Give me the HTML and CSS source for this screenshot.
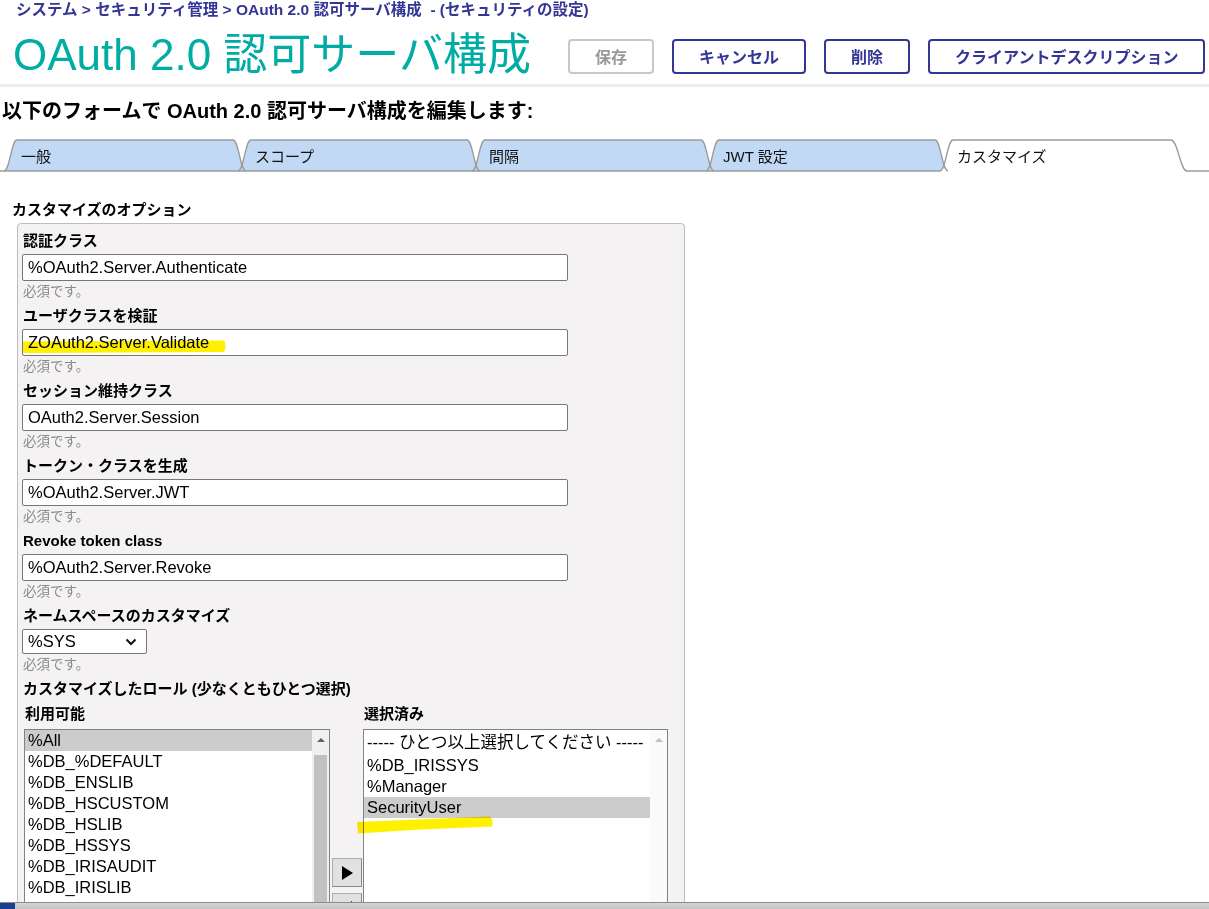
FILE: index.html
```html
<!DOCTYPE html>
<html lang="ja">
<head>
<meta charset="utf-8">
<title>OAuth 2.0 認可サーバ構成</title>
<link rel="stylesheet" href="styles.css">
</head>
<body>
<div class="page">
  <header class="header">
    <div class="breadcrumb">システム &gt; セキュリティ管理 &gt; OAuth 2.0 認可サーバ構成&nbsp; - (セキュリティの設定)</div>
    <div class="title-row">
      <h1 class="title">OAuth 2.0 認可サーバ構成</h1>
      <div class="actions">
        <button class="btn btn-disabled" type="button">保存</button>
        <button class="btn" type="button">キャンセル</button>
        <button class="btn" type="button">削除</button>
        <button class="btn" type="button">クライアントデスクリプション</button>
      </div>
    </div>
  </header>

  <h2 class="intro">以下のフォームで OAuth 2.0 認可サーバ構成を編集します:</h2>

  <div class="tabs">
    <svg class="tab-shapes" width="1209" height="33" viewBox="0 0 1209 33">
      <g fill="#c2d9f5">
        <path d="M4,32 C10,32 11,1 17,1 H233 C239,1 240,32 246,32 Z"/>
        <path d="M238,32 C244,32 245,1 251,1 H467 C473,1 474,32 480,32 Z"/>
        <path d="M472,32 C478,32 479,1 485,1 H701 C707,1 708,32 714,32 Z"/>
        <path d="M706,32 C712,32 713,1 719,1 H935 C941,1 942,32 948,32 Z"/>
      </g>
      <path fill="#ffffff" d="M940,32 C946,32 947,1 953,1 H1171 C1178,1 1180,32 1187,32 Z"/>
      <g fill="none" stroke="#9c9c9c" stroke-width="1.3">
        <path d="M4,32 C10,32 11,1 17,1 H233 C239,1 240,32 246,32"/>
        <path d="M238,32 C244,32 245,1 251,1 H467 C473,1 474,32 480,32"/>
        <path d="M472,32 C478,32 479,1 485,1 H701 C707,1 708,32 714,32"/>
        <path d="M706,32 C712,32 713,1 719,1 H935 C941,1 942,32 948,32"/>
        <path d="M940,32 C946,32 947,1 953,1 H1171 C1178,1 1180,32 1187,32"/>
        <path d="M0,32 H940 M1187,32 H1209"/>
      </g>
    </svg>
    <div class="tab-labels">
      <div class="tab">一般</div>
      <div class="tab">スコープ</div>
      <div class="tab">間隔</div>
      <div class="tab">JWT 設定</div>
      <div class="tab tab-active">カスタマイズ</div>
    </div>
  </div>

  <div class="section-title">カスタマイズのオプション</div>

  <div class="panel">
    <div class="field">
      <div class="label">認証クラス</div>
      <input class="text" type="text" value="%OAuth2.Server.Authenticate">
      <div class="help">必須です。</div>
    </div>
    <div class="field">
      <div class="label">ユーザクラスを検証</div>
      <input class="text" type="text" value="ZOAuth2.Server.Validate">
      <div class="help">必須です。</div>
    </div>
    <div class="field">
      <div class="label">セッション維持クラス</div>
      <input class="text" type="text" value="OAuth2.Server.Session">
      <div class="help">必須です。</div>
    </div>
    <div class="field">
      <div class="label">トークン・クラスを生成</div>
      <input class="text" type="text" value="%OAuth2.Server.JWT">
      <div class="help">必須です。</div>
    </div>
    <div class="field">
      <div class="label">Revoke token class</div>
      <input class="text" type="text" value="%OAuth2.Server.Revoke">
      <div class="help">必須です。</div>
    </div>
    <div class="field">
      <div class="label">ネームスペースのカスタマイズ</div>
      <div class="select">
        <span>%SYS</span>
        <svg class="chev" width="12" height="8" viewBox="0 0 12 8"><path d="M1.5,1.5 L6,6 L10.5,1.5" fill="none" stroke="#111" stroke-width="2"/></svg>
      </div>
      <div class="help">必須です。</div>
    </div>
    <div class="label">カスタマイズしたロール (少なくともひとつ選択)</div>

    <div class="roles">
      <div class="role-col">
        <div class="sublabel">利用可能</div>
        <div class="list">
          <div class="items">
            <div class="item sel">%All</div>
            <div class="item">%DB_%DEFAULT</div>
            <div class="item">%DB_ENSLIB</div>
            <div class="item">%DB_HSCUSTOM</div>
            <div class="item">%DB_HSLIB</div>
            <div class="item">%DB_HSSYS</div>
            <div class="item">%DB_IRISAUDIT</div>
            <div class="item">%DB_IRISLIB</div>
          </div>
          <div class="scrollbar">
            <div class="sb-up"><span class="tri"></span></div>
            <div class="sb-thumb"></div>
          </div>
        </div>
      </div>
      <div class="move-col">
        <div class="mv"><svg width="12" height="14" viewBox="0 0 12 14"><path d="M1,0 L12,7 L1,14 Z" fill="#000"/></svg></div>
        <div class="mv"><svg width="12" height="14" viewBox="0 0 12 14"><path d="M11,0 L0,7 L11,14 Z" fill="#000"/></svg></div>
      </div>
      <div class="role-col role-col-right">
        <div class="sublabel">選択済み</div>
        <div class="list">
          <div class="items">
            <div class="item item-hint">----- ひとつ以上選択してください -----</div>
            <div class="item">%DB_IRISSYS</div>
            <div class="item">%Manager</div>
            <div class="item sel">SecurityUser</div>
          </div>
          <div class="scrollbar scrollbar-off">
            <div class="sb-up"><span class="tri"></span></div>
          </div>
        </div>
      </div>
    </div>
  </div>

  <svg class="marks" width="1209" height="909" viewBox="0 0 1209 909">
    <path d="M23,341.5 L224,340.5 Q227,346 224,352 L23,353 Z" fill="#fff000"/>
    <path d="M357,822 L490,816.5 Q494,821 492,826.5 L420,829.5 L358,833.5 Z" fill="#fff000"/>
  </svg>

  <div class="statusbar"><span class="status-blue"></span></div>
</div>
</body>
</html>
```

FILE: styles.css
```css
html, body {
  margin: 0;
  padding: 0;
  background: #ffffff;
}

body {
  font-family: "Liberation Sans", "Noto Sans CJK JP", sans-serif;
  color: #000;
  overflow: hidden;
}

.page {
  position: relative;
  width: 1209px;
  height: 909px;
  overflow: hidden;
}

.header {
  border-bottom: 3px solid #eeeeee;
}

.breadcrumb {
  padding: 1px 0 0 16px;
  font-size: 15.5px;
  line-height: 18px;
  font-weight: bold;
  color: #333695;
  white-space: nowrap;
}

.title-row {
  display: flex;
  align-items: center;
  height: 58px;
  margin-top: 7px;
}

.title {
  flex: 0 0 568px;
  box-sizing: border-box;
  margin: 0;
  padding-left: 13px;
  font-size: 44px;
  line-height: 58px;
  font-weight: normal;
  color: #00aca4;
  white-space: nowrap;
}

.actions {
  display: flex;
  gap: 18px;
  padding-top: 2px;
}

.btn {
  height: 35px;
  box-sizing: border-box;
  padding: 0 25px;
  border: 2px solid #333695;
  border-radius: 4px;
  background: #ffffff;
  color: #333695;
  font-family: "Liberation Sans", "Noto Sans CJK JP", sans-serif;
  font-size: 16px;
  font-weight: bold;
  white-space: nowrap;
}

.btn-disabled {
  border-color: #c8c8c8;
  color: #999999;
}

.intro {
  margin: 12px 0 0 2px;
  font-size: 20px;
  line-height: 24px;
  font-weight: bold;
  white-space: nowrap;
}

.tabs {
  display: grid;
  margin-top: 16px;
  height: 33px;
}

.tabs > * {
  grid-area: 1 / 1;
}

.tab-shapes {
  display: block;
}

.tab-labels {
  display: flex;
  padding-left: 4px;
}

.tab {
  width: 234px;
  box-sizing: border-box;
  padding: 2px 0 0 17px;
  font-size: 15px;
  line-height: 31px;
  color: #111;
  white-space: nowrap;
}

.section-title {
  margin: 29px 0 0 12px;
  font-size: 15px;
  line-height: 18px;
  font-weight: bold;
}

.panel {
  margin: 4px 0 0 17px;
  width: 668px;
  height: 720px;
  box-sizing: border-box;
  padding: 8px 4px 0;
  border: 1px solid #bdbdbd;
  border-radius: 4px;
  background: #f4f2f3;
}

.field {
  margin-bottom: 6px;
}

.label {
  padding-left: 1px;
  font-size: 15px;
  line-height: 18px;
  font-weight: bold;
  white-space: nowrap;
}

.text {
  display: block;
  width: 546px;
  height: 27px;
  box-sizing: border-box;
  margin: 4px 0 2px;
  padding: 0 5px;
  border: 1px solid #767676;
  border-radius: 2px;
  background: #ffffff;
  font-family: "Liberation Sans", sans-serif;
  font-size: 16.5px;
  color: #000;
}

.select {
  display: flex;
  align-items: center;
  justify-content: space-between;
  width: 125px;
  height: 25px;
  box-sizing: border-box;
  margin: 4px 0 2px;
  padding: 0 9px 0 5px;
  border: 1px solid #767676;
  border-radius: 2px;
  background: #ffffff;
  font-size: 16.5px;
}

.chev {
  display: block;
}

.help {
  padding-left: 1px;
  font-size: 13.5px;
  line-height: 18px;
  color: #8a8a8a;
}

.roles {
  display: flex;
  margin: 7px 0 0 2px;
}

.role-col {
  width: 306px;
}

.role-col-right {
  width: 305px;
}

.sublabel {
  padding-left: 1px;
  font-size: 15px;
  line-height: 18px;
  font-weight: bold;
  margin-bottom: 6px;
}

.list {
  display: flex;
  height: 200px;
  box-sizing: border-box;
  border: 1px solid #828282;
  background: #ffffff;
  overflow: hidden;
}

.items {
  flex: 1;
  min-width: 0;
}

.item {
  height: 21px;
  padding-left: 3px;
  font-size: 16.5px;
  line-height: 21px;
  white-space: nowrap;
  overflow: hidden;
}

.item-hint {
  height: 25px;
  line-height: 25px;
  padding-left: 3px;
}

.sel {
  background: #cccccc;
}

.scrollbar {
  display: flex;
  flex-direction: column;
  width: 17px;
  background: #f0f0f0;
}

.scrollbar-off {
  background: #fafafa;
}

.sb-up {
  display: flex;
  align-items: center;
  justify-content: center;
  height: 20px;
}

.tri {
  width: 0;
  height: 0;
  border-left: 4px solid transparent;
  border-right: 4px solid transparent;
  border-bottom: 4px solid #606060;
}

.scrollbar-off .tri {
  border-bottom-color: #c0c0c0;
}

.sb-thumb {
  flex: 1;
  margin: 5px 2px 0;
  background: #c1c1c1;
}

.move-col {
  display: flex;
  flex-direction: column;
  gap: 6px;
  width: 30px;
  margin: 0 1px 0 2px;
  padding-top: 153px;
}

.mv {
  display: flex;
  align-items: center;
  justify-content: center;
  height: 29px;
  box-sizing: border-box;
  border: 1px solid #adadad;
  border-right-color: #8a8a8a;
  border-bottom-color: #8a8a8a;
  background: #e1e1e1;
}

.marks {
  position: absolute;
  left: 0;
  top: 0;
  mix-blend-mode: multiply;
  pointer-events: none;
}

.statusbar {
  position: absolute;
  left: 0;
  right: 0;
  bottom: 0;
  height: 7px;
  box-sizing: border-box;
  border-top: 1px solid #8c8c8c;
  background: linear-gradient(#d4d4d4, #c4c4c4);
}

.status-blue {
  display: block;
  width: 15px;
  height: 6px;
  background: #1c3f94;
}
```
